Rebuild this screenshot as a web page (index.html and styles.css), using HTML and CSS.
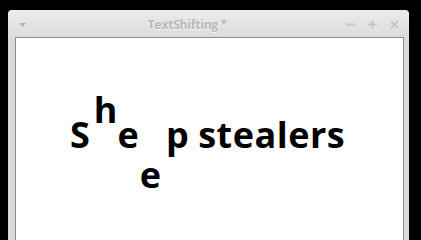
FILE: index.html
```html
<!DOCTYPE html>
<html>
<head>
<meta charset="utf-8">
<link rel="stylesheet" href="styles.css">
</head>
<body>
<div class="window">
  <div class="titlebar">
    <div class="tb-left">
      <svg class="menu-btn" width="7" height="4" viewBox="0 0 7 4"><polygon points="0,0 7,0 3.5,4" fill="#b4b4b4"/></svg>
    </div>
    <div class="title">TextShifting *</div>
    <div class="tb-right">
      <svg width="9" height="9" viewBox="0 0 9 9"><rect x="0" y="3.5" width="9" height="2" fill="#c6c6c6"/></svg>
      <svg width="9" height="9" viewBox="0 0 9 9"><rect x="0" y="3.5" width="9" height="2" fill="#c6c6c6"/><rect x="3.5" y="0" width="2" height="9" fill="#c6c6c6"/></svg>
      <svg width="9" height="9" viewBox="0 0 9 9"><path d="M1,1 L8,8 M8,1 L1,8" stroke="#c6c6c6" stroke-width="2"/></svg>
    </div>
  </div>
  <div class="content">
    <p class="line"><span class="ch c-s">S</span><span class="ch c-h up">h</span><span class="ch c-e1">e</span><span class="ch c-e2 down">e</span><span class="ch c-p">p</span> <span class="word">stealers</span></p>
  </div>
</div>
</body>
</html>
```
FILE: styles.css
```css
html, body {
  margin: 0;
  padding: 0;
  background: #000;
  height: 100%;
  overflow: hidden;
}
.window {
  margin: 10px 0 0 8px;
  width: 401px;
  height: calc(100vh - 10px);
  background: #dadada;
  border-radius: 4px 4px 0 0;
  display: flex;
  flex-direction: column;
  overflow: hidden;
}
.titlebar {
  height: 27px;
  flex: none;
  display: flex;
  align-items: center;
  background: linear-gradient(#ececec, #dcdcdc);
  border-radius: 4px 4px 0 0;
}
.tb-left {
  width: 27px;
  padding-left: 11px;
  box-sizing: border-box;
  display: flex;
  align-items: center;
  padding-top: 2px;
}
.title {
  flex: 1;
  text-align: center;
  font-family: "Open Sans", "DejaVu Sans", sans-serif;
  font-weight: 700;
  font-size: 12px;
  letter-spacing: -0.2px;
  color: #b9b9b9;
  text-shadow: 0 1px 0 #f6f6f6;
  padding-top: 1px;
}
.tb-right {
  display: flex;
  align-items: center;
  gap: 13px;
  padding: 2px 10px 0 0;
  width: 69px;
  box-sizing: border-box;
  justify-content: flex-end;
}
.tb-right svg { display: block; }
.content {
  flex: 1;
  min-height: 0;
  margin: 0 5px 0 7px;
  background: #fff;
  border: 1px solid #8c8c8c;
  border-bottom: none;
  overflow: hidden;
}
.line {
  margin: 0;
  padding: 54px 0 0 54px;
  font-family: "Open Sans", "DejaVu Sans", sans-serif;
  font-weight: 700;
  font-size: 36px;
  line-height: 36px;
  color: #000;
  white-space: nowrap;
}
.ch { display: inline-block; }
.up { vertical-align: 25px; }
.down { vertical-align: -40px; }
.c-s { margin-right: 4px; }
.c-h { margin-right: 0px; }
.c-e1 { margin-right: 1px; }
.c-e2 { margin-right: 5px; }
.word { letter-spacing: 0.5px; }
```
